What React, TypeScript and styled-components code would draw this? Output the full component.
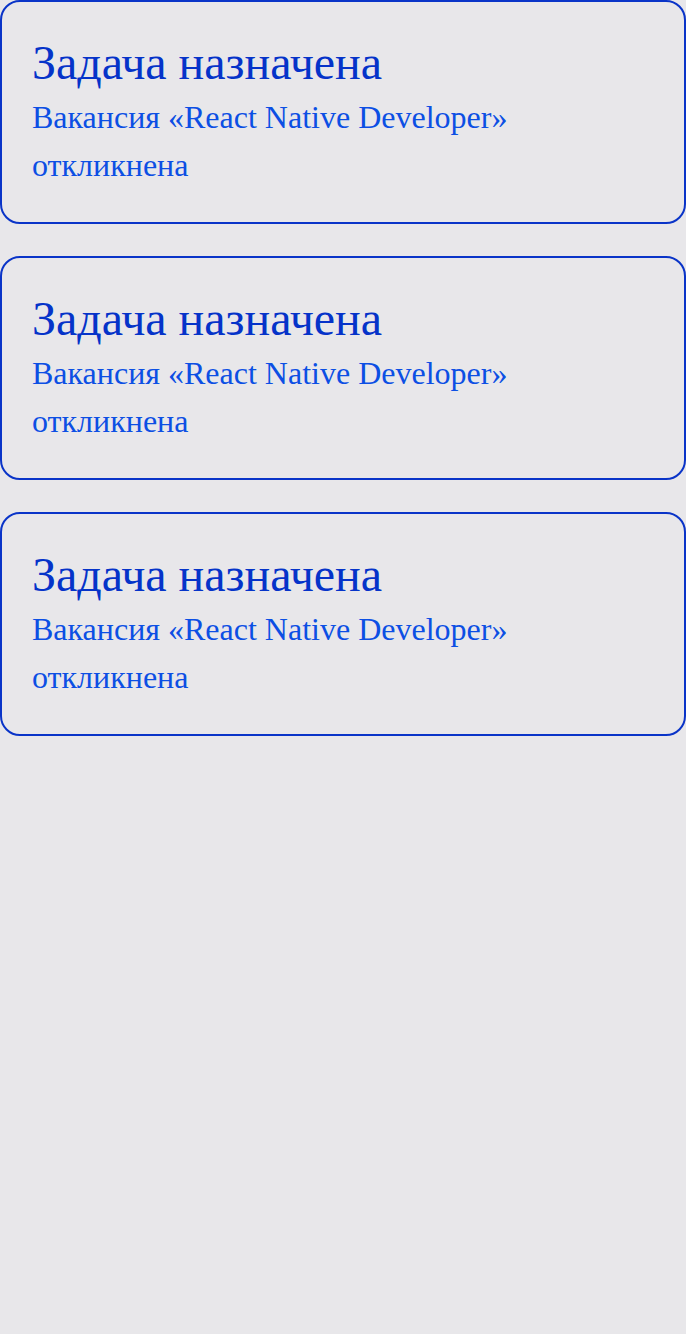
import React from "react";
import styled, { createGlobalStyle } from "styled-components";

const Global = createGlobalStyle`
  html, body { margin: 0; padding: 0; background: #e8e7ea; }
  body { font-family: "Liberation Serif", "Times New Roman", serif; }
`;

const List = styled.div`
  display: flex;
  flex-direction: column;
  gap: 32px;
  min-height: 1334px;
  box-sizing: border-box;
`;

const Card = styled.div`
  border: 2px solid #0a34c8;
  border-radius: 20px;
  padding: 30px 30px 0;
  box-sizing: border-box;
  height: 224px;
`;

const Title = styled.div`
  font-size: 48px;
  line-height: 61px;
  color: #0533c9;
`;

const Text = styled.div`
  font-size: 32px;
  line-height: 48px;
  color: #0c4fe4;
`;

const items = [1, 2, 3];

export default function App() {
  return (
    <>
      <Global />
      <List>
        {items.map((i) => (
          <Card key={i}>
            <Title>Задача назначена</Title>
            <Text>
              Вакансия «React Native Developer»
              <br />
              откликнена
            </Text>
          </Card>
        ))}
      </List>
    </>
  );
}
